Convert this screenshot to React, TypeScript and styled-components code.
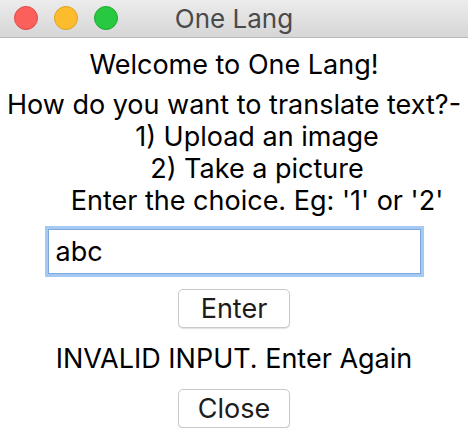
import React from "react";
import styled, { createGlobalStyle } from "styled-components";

const Global = createGlobalStyle`
  html, body { margin: 0; padding: 0; background: #ffffff; overflow: hidden; }
  * { box-sizing: border-box; }
`;

const Window = styled.div`
  width: 468px;
  height: 428px;
  display: flex;
  flex-direction: column;
  background: #ffffff;
  font-family: Inter, "Liberation Sans", sans-serif;
  overflow: hidden;
`;

const TitleBar = styled.div`
  height: 38px;
  flex: none;
  position: relative;
  display: flex;
  align-items: center;
  justify-content: center;
  background: linear-gradient(#ececec, #d6d6d6);
  border-bottom: 1px solid #b9b9b9;
`;

const Lights = styled.div`
  position: absolute;
  left: 14px;
  top: 6px;
  display: flex;
  gap: 16px;
`;

const Light = styled.span<{ $fill: string; $edge: string }>`
  width: 24px;
  height: 24px;
  border-radius: 50%;
  background: ${(p) => p.$fill};
  border: 1px solid ${(p) => p.$edge};
`;

const Title = styled.div`
  font-size: 26px;
  color: #4a4a4a;
  line-height: 32px;
`;

const Body = styled.div`
  display: flex;
  flex-direction: column;
  align-items: center;
  color: #000;
  font-size: 27px;
  line-height: 32px;
`;

const Text = styled.div<{ $top: number }>`
  margin-top: ${(p) => p.$top}px;
  text-align: center;
  white-space: nowrap;
`;

const Prompt = styled.div`
  margin-top: 8px;
  display: flex;
  flex-direction: column;
  align-items: center;
`;

const Line = styled.div<{ $indent?: number }>`
  white-space: nowrap;
  padding-left: ${(p) => p.$indent ?? 0}px;
`;

const Field = styled.input`
  margin-top: 12px;
  width: 373px;
  height: 45px;
  border: 1px solid #7ea8da;
  box-shadow: 0 0 0 3px #a4c9f3;
  outline: none;
  padding: 0 0 0 7px;
  font-family: inherit;
  font-size: 27px;
  color: #000;
  background: #fff;
`;

const Button = styled.button<{ $top: number }>`
  margin-top: ${(p) => p.$top}px;
  width: 112px;
  height: 39px;
  flex: none;
  border: 1px solid #c9c9c9;
  border-radius: 5px;
  background: #ffffff;
  box-shadow: 0 1px 1px rgba(0, 0, 0, 0.12);
  font-family: inherit;
  font-size: 27px;
  color: #1c1c1c;
  padding: 0;
  line-height: 1;
`;

export default function App() {
  return (
    <Window>
      <Global />
      <TitleBar>
        <Lights>
          <Light $fill="#fc605b" $edge="#dc4b47" />
          <Light $fill="#fdbc2e" $edge="#dea124" />
          <Light $fill="#28c840" $edge="#1faa2f" />
        </Lights>
        <Title>One Lang</Title>
      </TitleBar>
      <Body>
        <Text $top={11}>Welcome to One Lang!</Text>
        <Prompt>
          <Line>How do you want to translate text?-</Line>
          <Line $indent={46}>1) Upload an image</Line>
          <Line $indent={46}>2) Take a picture</Line>
          <Line $indent={46}>Enter the choice. Eg: '1' or '2'</Line>
        </Prompt>
        <Field defaultValue="abc" />
        <Button $top={15}>Enter</Button>
        <Text $top={15}>INVALID INPUT. Enter Again</Text>
        <Button $top={14}>Close</Button>
      </Body>
    </Window>
  );
}
